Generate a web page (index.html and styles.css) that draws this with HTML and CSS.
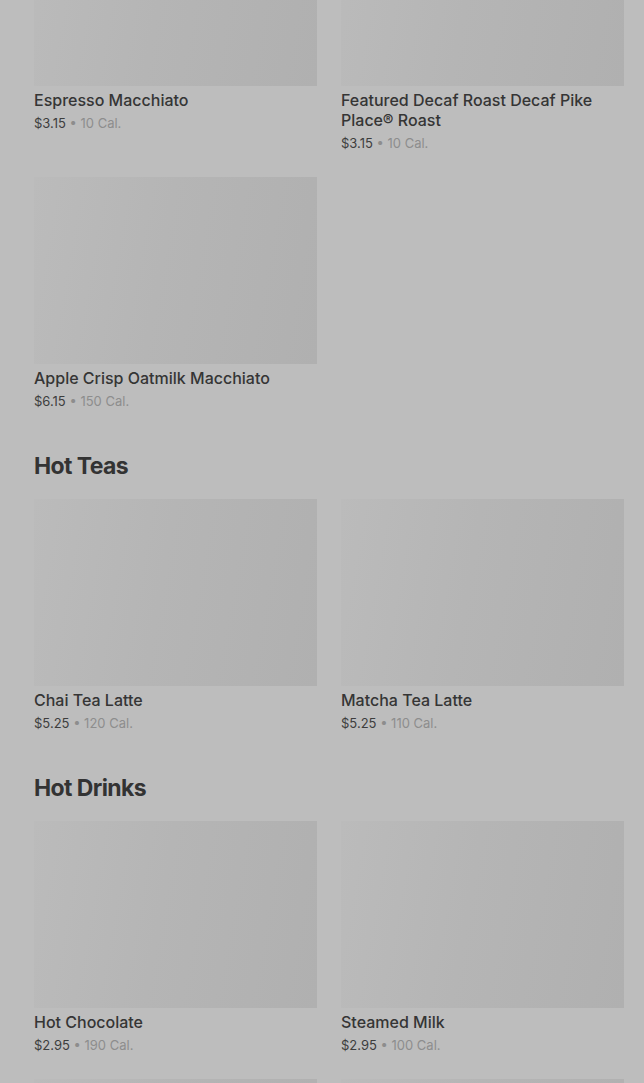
FILE: index.html
```html
<!DOCTYPE html>
<html lang="en">
<head>
    <meta charset="UTF-8">
    <meta name="viewport" content="width=device-width, initial-scale=1.0">
    <title>Menu</title>
    <link rel="stylesheet" href="styles.css">
</head>
<body>

<div class="menu">
    <section class="category first">
        <div class="items">
            <div class="item">
                <div class="thumb"></div>
                <div class="name">Espresso Macchiato</div>
                <div class="meta"><span class="price">$3.15</span> • 10 Cal.</div>
            </div>
            <div class="item">
                <div class="thumb"></div>
                <div class="name">Featured Decaf Roast Decaf Pike Place® Roast</div>
                <div class="meta"><span class="price">$3.15</span> • 10 Cal.</div>
            </div>
            <div class="item">
                <div class="thumb"></div>
                <div class="name">Apple Crisp Oatmilk Macchiato</div>
                <div class="meta"><span class="price">$6.15</span> • 150 Cal.</div>
            </div>
        </div>
    </section>

    <section class="category">
        <h2>Hot Teas</h2>
        <div class="items">
            <div class="item">
                <div class="thumb"></div>
                <div class="name">Chai Tea Latte</div>
                <div class="meta"><span class="price">$5.25</span> • 120 Cal.</div>
            </div>
            <div class="item">
                <div class="thumb"></div>
                <div class="name">Matcha Tea Latte</div>
                <div class="meta"><span class="price">$5.25</span> • 110 Cal.</div>
            </div>
        </div>
    </section>

    <section class="category">
        <h2>Hot Drinks</h2>
        <div class="items">
            <div class="item">
                <div class="thumb"></div>
                <div class="name">Hot Chocolate</div>
                <div class="meta"><span class="price">$2.95</span> • 190 Cal.</div>
            </div>
            <div class="item">
                <div class="thumb"></div>
                <div class="name">Steamed Milk</div>
                <div class="meta"><span class="price">$2.95</span> • 100 Cal.</div>
            </div>
            <div class="item">
                <div class="thumb"></div>
            </div>
            <div class="item">
                <div class="thumb"></div>
            </div>
        </div>
    </section>
</div>

</body>
</html>
```

FILE: styles.css
```css
body {
    margin: 0;
    background-color: #bdbdbd;
    font-family: Inter, "Noto Sans", Arial, sans-serif;
    color: #333;
    overflow: hidden;
}

.menu {
    padding: 0 20px 0 34px;
}

.category {
    margin-top: 39px;
}

.category.first {
    margin-top: -101px;
}

.category h2 {
    margin: 0 0 17px;
    font-size: 23px;
    line-height: 32px;
    font-weight: 700;
    letter-spacing: -0.6px;
    color: #333;
}

.items {
    display: grid;
    grid-template-columns: 283px 283px;
    column-gap: 24px;
    row-gap: 24px;
}

.thumb {
    height: 187px;
    background: linear-gradient(100deg, #bbbbbb 0%, #b5b5b5 45%, #b0b0b0 100%);
}

.name {
    margin-top: 4px;
    font-size: 16px;
    line-height: 20px;
    font-weight: 500;
    color: #353535;
}

.meta {
    margin-top: 3px;
    font-size: 13px;
    line-height: 20px;
    color: #8d8d8d;
}

.price {
    color: #3d3d3d;
}
```
